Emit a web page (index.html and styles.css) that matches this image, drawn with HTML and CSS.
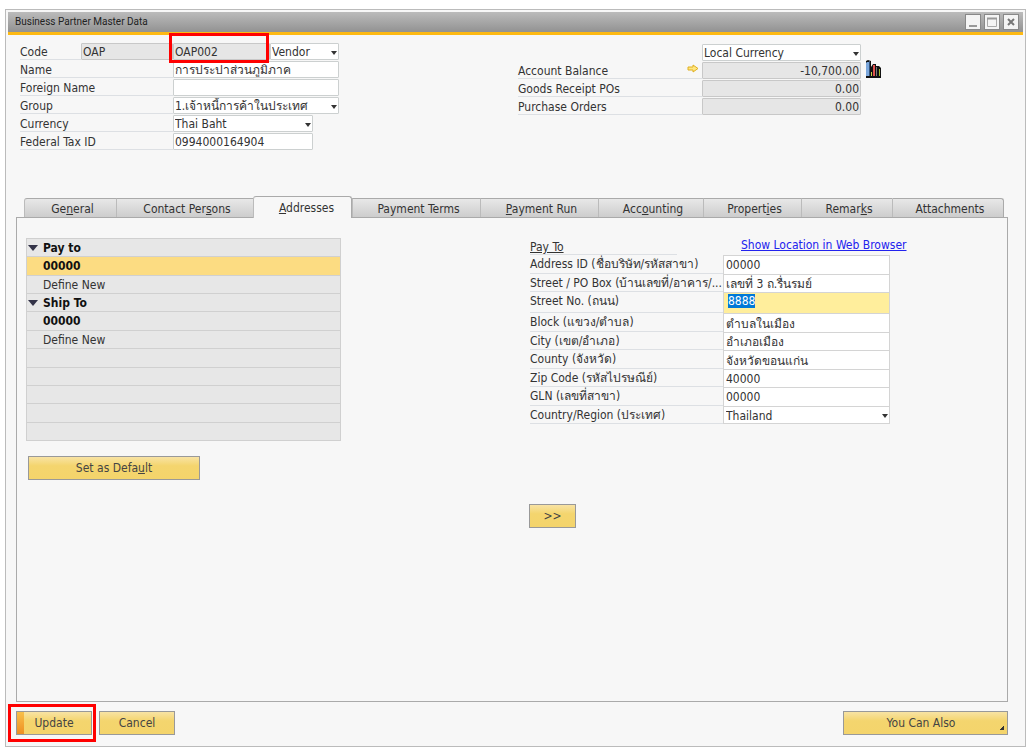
FILE: index.html
```html
<!DOCTYPE html>
<html lang="en">
<head>
    <meta charset="UTF-8">
    <meta name="viewport" content="width=device-width, initial-scale=1.0">
    <title>Business Partner Master Data</title>
    <link rel="stylesheet" href="styles.css">
</head>
<body>
    <div class="window">
        <header class="titlebar">
            <h1>Business Partner Master Data</h1>
            <div class="window-controls">
                <button type="button" aria-label="Minimize">
                    <svg viewBox="0 0 14 14"><path d="M3 11H11" stroke="#999" stroke-width="2"/></svg>
                </button>
                <button type="button" aria-label="Maximize">
                    <svg viewBox="0 0 14 14"><path d="M2.5 3.5H11.5V11.5H2.5Z" fill="none" stroke="#aaa"/><path d="M2 3.5H12" stroke="#999" stroke-width="2"/></svg>
                </button>
                <button type="button" aria-label="Close">
                    <svg viewBox="0 0 14 14"><path d="M4 4L10 10M10 4L4 10" stroke="#777" stroke-width="2"/></svg>
                </button>
            </div>
        </header>

        <form class="content" id="partnerForm">
            <section class="summary">
                <div class="general">
                    <div class="row">
                        <label for="code">Code</label>
                        <input type="text" class="series" aria-label="Series" value="OAP" readonly>
                        <div class="code-field">
                            <input type="text" id="code" value="OAP002" readonly>
                            <span class="highlight"></span>
                        </div>
                        <div class="select type">
                            <select aria-label="Partner type"><option>Vendor</option></select>
                        </div>
                    </div>
                    <div class="row">
                        <label for="name">Name</label>
                        <input type="text" id="name" value="การประปาส่วนภูมิภาค">
                    </div>
                    <div class="row">
                        <label for="foreignName">Foreign Name</label>
                        <input type="text" id="foreignName">
                    </div>
                    <div class="row">
                        <label for="group">Group</label>
                        <div class="select">
                            <select id="group"><option>1.เจ้าหนี้การค้าในประเทศ</option></select>
                        </div>
                    </div>
                    <div class="row short">
                        <label for="currency">Currency</label>
                        <div class="select">
                            <select id="currency"><option>Thai Baht</option></select>
                        </div>
                    </div>
                    <div class="row short">
                        <label for="taxId">Federal Tax ID</label>
                        <input type="text" id="taxId" value="0994000164904">
                    </div>
                </div>

                <div class="balances">
                    <div class="row">
                        <div class="select balance-currency">
                            <select aria-label="Balance currency"><option>Local Currency</option></select>
                        </div>
                    </div>
                    <div class="row">
                        <label for="balance">Account Balance
                            <svg class="arrow" viewBox="0 0 12 9"><path d="M1 3H6V1L11 4.5L6 8V6H1Z" fill="#ffe680" stroke="#e0b020"/></svg>
                        </label>
                        <input type="text" id="balance" value="-10,700.00" readonly>
                        <svg class="chart" viewBox="0 0 16 18">
                            <path d="M1 1L3 0L6 1V7L8 4L11 4V6L14 6L16 8V18H1Z" fill="#111"/>
                            <path d="M2 2H4V16H1V3Z" fill="#7ba7dc"/>
                            <path d="M4 1H5V16H4Z" fill="#35557c"/>
                            <path d="M6 12H7V16H6Z" fill="#c8d24a"/>
                            <path d="M8 5H10V16H8Z" fill="#e0524f"/>
                            <path d="M11 7H12V16H11Z" fill="#777"/>
                            <path d="M14 9H15V16H14Z" fill="#a5b92c"/>
                        </svg>
                    </div>
                    <div class="row">
                        <label for="receipts">Goods Receipt POs</label>
                        <input type="text" id="receipts" value="0.00" readonly>
                    </div>
                    <div class="row">
                        <label for="orders">Purchase Orders</label>
                        <input type="text" id="orders" value="0.00" readonly>
                    </div>
                </div>
            </section>

            <nav class="tabs" role="tablist">
                <button type="button" role="tab">Ge<u>n</u>eral</button>
                <button type="button" role="tab">Contact Per<u>s</u>ons</button>
                <button type="button" role="tab" class="active" aria-selected="true"><u>A</u>ddresses</button>
                <button type="button" role="tab">Payment Terms</button>
                <button type="button" role="tab"><u>P</u>ayment Run</button>
                <button type="button" role="tab">Acc<u>o</u>unting</button>
                <button type="button" role="tab">Propert<u>i</u>es</button>
                <button type="button" role="tab">Remar<u>k</u>s</button>
                <button type="button" role="tab">Attachments</button>
            </nav>

            <section class="panel">
                <div class="address-list">
                    <ul class="tree">
                        <li class="group">Pay to</li>
                        <li class="default selected">00000</li>
                        <li>Define New</li>
                        <li class="group">Ship To</li>
                        <li class="default">00000</li>
                        <li>Define New</li>
                        <li></li>
                        <li></li>
                        <li></li>
                        <li></li>
                        <li></li>
                    </ul>
                    <button type="button" class="btn set-default">Set as Defa<u>u</u>lt</button>
                </div>

                <div class="address">
                    <div class="address-head">
                        <h2>Pay To</h2>
                        <a href="#map">Show Location in Web Browser</a>
                    </div>
                    <div class="address-grid">
                        <label for="addressId">Address ID (ชื่อบริษัท/รหัสสาขา)</label>
                        <input type="text" id="addressId" value="00000">
                        <label for="street">Street / PO Box (บ้านเลขที่/อาคาร/...</label>
                        <input type="text" id="street" value="เลขที่ 3 ถ.รื่นรมย์">
                        <label for="streetNo">Street No. (ถนน)</label>
                        <input type="text" id="streetNo" class="editing" value="8888">
                        <label for="block">Block (แขวง/ตำบล)</label>
                        <input type="text" id="block" value="ตำบลในเมือง">
                        <label for="city">City (เขต/อำเภอ)</label>
                        <input type="text" id="city" value="อำเภอเมือง">
                        <label for="county">County (จังหวัด)</label>
                        <input type="text" id="county" value="จังหวัดขอนแก่น">
                        <label for="zip">Zip Code (รหัสไปรษณีย์)</label>
                        <input type="text" id="zip" value="40000">
                        <label for="gln">GLN (เลขที่สาขา)</label>
                        <input type="text" id="gln" value="00000">
                        <label for="country">Country/Region (ประเทศ)</label>
                        <div class="select">
                            <select id="country"><option>Thailand</option></select>
                        </div>
                    </div>
                    <button type="button" class="btn more">&gt;&gt;</button>
                </div>
            </section>

            <footer class="actions">
                <div class="update">
                    <button type="submit" class="btn primary">Update</button>
                    <span class="highlight"></span>
                </div>
                <button type="button" class="btn">Cancel</button>
                <button type="button" class="btn menu">You Can Also</button>
            </footer>
        </form>
    </div>

    <script>
        // Start with the street number ready to be overwritten
        const streetNo = document.getElementById('streetNo');
        streetNo.focus();
        streetNo.select();

        document.getElementById('partnerForm').addEventListener('submit', function(e) {
            e.preventDefault();
        });
    </script>
</body>
</html>
```
FILE: styles.css
```css
* {
    box-sizing: border-box;
}
body {
    margin: 0;
    padding: 9px 4px 6px 5px;
    min-height: 100vh;
    display: flex;
    background: #fff;
    color: #333;
    font-family: "DejaVu Sans Condensed", "Noto Sans", sans-serif;
    font-size: 12px;
    line-height: 16px;
}
input,
select,
button {
    font: inherit;
    color: inherit;
}
.window {
    flex: 1;
    display: flex;
    flex-direction: column;
    border: 1px solid #bbb;
    padding: 2px;
    background: #f7f7f7;
}

/* title bar */
.titlebar {
    display: flex;
    align-items: center;
    justify-content: space-between;
    height: 23px;
    padding: 0 4px 0 7px;
    background: linear-gradient(#bbb, #929292);
    border-bottom: 3px solid #fdb913;
}
.titlebar h1 {
    margin: 0;
    font-family: Roboto, sans-serif;
    font-size: 10px;
    font-weight: 400;
    color: #222;
}
.window-controls {
    display: flex;
    gap: 3px;
}
.window-controls button {
    width: 16px;
    height: 16px;
    padding: 0;
    border: 1px solid #888;
    background: #f4f4f4;
}
.window-controls svg {
    display: block;
    width: 14px;
    height: 14px;
}

.content {
    flex: 1;
    display: flex;
    flex-direction: column;
    padding: 8px 15px 9px 8px;
}

/* header fields */
.summary {
    display: grid;
    grid-template-columns: 497fr 489fr;
    min-height: 153px;
    padding-left: 4px;
}
.row {
    display: flex;
    height: 18px;
    padding-bottom: 1px;
}
.row label {
    line-height: 19px;
}
label {
    white-space: nowrap;
}
.balances {
    padding-top: 1px;
}
.general label {
    width: 153px;
    border-bottom: 1px solid #dde0e4;
}
.general .row > input,
.general .row > .select {
    width: 166px;
}
.general .short > input,
.general .short > .select {
    width: 140px;
}
.general .row > .series {
    width: 92px;
}
.general .row:first-child label {
    width: 61px;
}
.general .row > .type {
    width: 69px;
}
.code-field {
    position: relative;
    display: flex;
    width: 97px;
}
.balances label {
    display: flex;
    justify-content: space-between;
    width: 184px;
    padding-right: 3px;
    border-bottom: 1px solid #dde0e4;
}
.balances input {
    width: 159px;
    text-align: right;
}
.balance-currency {
    width: 159px;
    margin-left: 184px;
}
.arrow {
    width: 12px;
    height: 9px;
    margin-top: 2px;
}
.chart {
    width: 16px;
    height: 18px;
    margin: -2px 0 0 4px;
}

input,
select {
    display: block;
    width: 100%;
    min-width: 0;
    height: 17px;
    margin: 0;
    padding: 0 1px;
    border: 1px solid #ccd0d0;
    border-radius: 1px;
    background: #fff;
    outline: none;
}
input[readonly] {
    background: #e6e6e6;
    border-color: #c8c8c8;
}
.select {
    position: relative;
}
select {
    appearance: none;
}
.select::after {
    content: "";
    position: absolute;
    right: 2px;
    top: 8px;
    border: 3px solid transparent;
    border-top: 4px solid #333;
    border-bottom: 0;
    pointer-events: none;
}

/* red callout frames */
.highlight {
    position: absolute;
    border: 3px solid #f00;
    pointer-events: none;
}
.code-field .highlight {
    inset: -10px 1px -3px -4px;
    z-index: 1;
}
.update .highlight {
    inset: -7px -4px -7px -8px;
}

/* tabs */
.tabs {
    display: grid;
    grid-template-columns: 92fr 137fr 99fr 128fr 118fr 105fr 98fr 91fr 112fr;
    align-items: end;
    height: 22px;
    margin: 0 4px -1px 8px;
    z-index: 1;
}
.tabs button {
    height: 19px;
    margin-bottom: 1px;
    padding: 1px 0 0 4px;
    border: 1px solid #aaa;
    border-bottom: 0;
    border-left-color: #bbb;
    border-right: 0;
    background: linear-gradient(#e8e8e8, #cdcdcd);
    line-height: 18px;
    white-space: nowrap;
}
.tabs button:last-child {
    border-right: 1px solid #aaa;
    border-top-right-radius: 3px;
}
.tabs button:first-child {
    border-top-left-radius: 3px;
}
.tabs .active {
    height: 22px;
    margin-bottom: 0;
    padding-left: 8px;
    border-right: 1px solid #aaa;
    border-radius: 3px 3px 0 0;
    background: #f7f7f7;
}

.panel {
    flex: 1;
    display: grid;
    grid-template-columns: 504fr 468fr;
    padding: 20px 9px;
    border: 1px solid #aaa;
}
.tree {
    display: grid;
    grid-auto-rows: minmax(0, 1fr);
    width: 315px;
    height: 203px;
    margin: 0;
    padding: 0;
    list-style: none;
    border: 1px solid #d0d0d0;
    border-bottom: 0;
    background: #e7e7e7;
}
.tree li {
    padding-left: 16px;
    border-bottom: 1px solid #d0d0d0;
    line-height: 18px;
}
.tree .group,
.tree .default {
    position: relative;
    color: #111;
    font-weight: 700;
}
.tree .group::before {
    content: "";
    position: absolute;
    left: 1px;
    top: 6px;
    border: 5px solid transparent;
    border-top: 6px solid #333348;
    border-bottom: 0;
}
.tree .selected {
    background: #fcdc82;
}

/* buttons */
.btn {
    display: block;
    height: 24px;
    padding: 0;
    border: 1px solid #999;
    background: linear-gradient(#f8e3a4, #f4d56e 40%, #f4d46b);
    color: #444;
}
.set-default {
    width: 172px;
    margin: 15px 0 0 2px;
}
.more {
    width: 47px;
    margin: 80px 0 0 -1px;
}

/* address form */
.address-head {
    display: flex;
    height: 17px;
}
.address-head h2 {
    width: 147px;
    margin: 0 64px 0 0;
    border-bottom: 1px solid #dde0e4;
    font-size: 12px;
    font-weight: 400;
    line-height: 18px;
    text-decoration: underline;
}
.address-head a {
    color: #22e;
    line-height: 14px;
    white-space: nowrap;
}
.address-grid {
    display: grid;
    grid-template-columns: 193px 167px;
    grid-template-rows: minmax(0, 1fr) minmax(0, 1fr) 21px repeat(6, minmax(0, 1fr));
    height: 169px;
}
.address-grid label {
    border-bottom: 1px solid #dde0e4;
    line-height: 19px;
}
.address-grid input,
.address-grid select {
    height: 100%;
    padding: 1px 2px 0;
    border: 1px solid #d4d4d4;
    border-bottom: 0;
    border-radius: 0;
}
.address-grid .select {
    border-bottom: 1px solid #d4d4d4;
}
.address-grid .editing {
    padding: 0 4px 4px;
    background: #ffee9c;
}
.editing::selection {
    background: #0078d7;
    color: #fff;
}

/* bottom buttons */
.actions {
    display: flex;
    gap: 7px;
    margin-top: 9px;
}
.actions .btn {
    width: 76px;
}
.update {
    position: relative;
}
.actions .primary {
    background:
        linear-gradient(#f9c04a, #ee8f22) 0 0 / 7px 100% no-repeat,
        linear-gradient(#f8e3a4, #f4d56e 40%, #f4d46b);
}
.actions .menu {
    width: 165px;
    margin-left: auto;
    padding-right: 9px;
    background:
        linear-gradient(135deg, transparent 50%, #333 50%) right 3px bottom 4px / 4px 4px no-repeat,
        linear-gradient(#f8e3a4, #f4d56e 40%, #f4d46b);
}
```
